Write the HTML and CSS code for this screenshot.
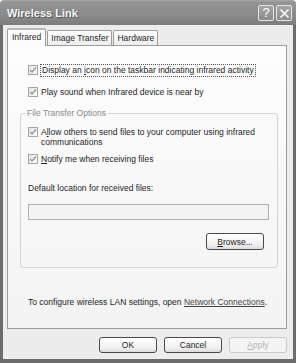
FILE: index.html
```html
<!DOCTYPE html>
<html lang="en">
<head>
  <meta charset="UTF-8" />
  <title>Wireless Link</title>
  <link rel="stylesheet" href="styles.css">
</head>
<body>
  <div class="window">
    <div class="titlebar">
      <span class="title">Wireless Link</span>
      <div class="caption-buttons">
        <span class="cap-btn">?</span>
        <span class="cap-btn">
          <svg width="11" height="11" viewBox="0 0 11 11"><path d="M1.5 1.5 L9.5 9.5 M9.5 1.5 L1.5 9.5" stroke="#fff" stroke-width="1.6" /></svg>
        </span>
      </div>
    </div>

    <div class="frame">
      <div class="tabs">
        <div class="tab active">Infrared</div>
        <div class="tab">Image Transfer</div>
        <div class="tab">Hardware</div>
      </div>

      <div class="panel">
        <div class="check-row">
          <span class="checkbox"><svg width="8" height="8" viewBox="0 0 8 8"><path d="M1 4 L3 6 L7 1.5" fill="none" stroke="#9a9a9a" stroke-width="1.4" /></svg></span>
          <span class="focus">Display an <u>i</u>con on the taskbar indicating infrared activity</span>
        </div>
        <div class="check-row">
          <span class="checkbox"><svg width="8" height="8" viewBox="0 0 8 8"><path d="M1 4 L3 6 L7 1.5" fill="none" stroke="#9a9a9a" stroke-width="1.4" /></svg></span>
          <span>Play sound when Infrared device is near by</span>
        </div>

        <fieldset class="group">
          <legend>File Transfer Options</legend>
          <div class="check-row first">
            <span class="checkbox"><svg width="8" height="8" viewBox="0 0 8 8"><path d="M1 4 L3 6 L7 1.5" fill="none" stroke="#9a9a9a" stroke-width="1.4" /></svg></span>
            <span>A<u>l</u>low others to send files to your computer using infrared<br>communications</span>
          </div>
          <div class="check-row">
            <span class="checkbox"><svg width="8" height="8" viewBox="0 0 8 8"><path d="M1 4 L3 6 L7 1.5" fill="none" stroke="#9a9a9a" stroke-width="1.4" /></svg></span>
            <span><u>N</u>otify me when receiving files</span>
          </div>

          <div class="field-label">Default location for received files:</div>
          <div class="textbox"></div>
          <div class="browse-row">
            <button class="btn"><u>B</u>rowse...</button>
          </div>
        </fieldset>

        <p class="note">To configure wireless LAN settings, open <a href="#">Network Connections</a>.</p>
      </div>

      <div class="buttons">
        <button class="btn">OK</button>
        <button class="btn">Cancel</button>
        <button class="btn disabled"><u>A</u>pply</button>
      </div>
    </div>
  </div>
</body>
</html>
```

FILE: styles.css
```css
:root {
  --frame-dark: #6c6c6c;
  --face: #ececec;
  --panel-border: #9c9c9c;
  --text: #1e1e1e;
}

body {
  margin: 0;
  font-family: 'Liberation Sans', Arial, sans-serif;
  font-size: 8.5px;
  color: var(--text);
}

.window {
  width: 296px;
  height: 363px;
  display: flex;
  flex-direction: column;
}

/* Title bar */
.titlebar {
  height: 25px;
  flex-shrink: 0;
  display: flex;
  align-items: center;
  justify-content: space-between;
  padding: 0 4px 0 7px;
  box-sizing: border-box;
  background: linear-gradient(#a9a9a9 0, #949494 2px, #8a8a8a 60%, #7c7c7c 100%);
  border-radius: 4px 4px 0 0;
}

.title {
  color: #f4f4f4;
  font-weight: bold;
  font-size: 11px;
  text-shadow: 1px 1px 0 #5a5a5a;
  padding-top: 1px;
}

.caption-buttons {
  display: flex;
  gap: 2px;
  padding-top: 1px;
}

.cap-btn {
  width: 14px;
  height: 14px;
  border: 1px solid #e6e6e6;
  border-radius: 2px;
  background: linear-gradient(#a4a4a4, #8c8c8c);
  color: #fff;
  font-size: 13px;
  line-height: 14px;
  text-align: center;
  display: flex;
  align-items: center;
  justify-content: center;
}

/* Frame body */
.frame {
  flex: 1;
  background: var(--face);
  border: 3px solid var(--frame-dark);
  border-top: none;
  border-bottom-width: 4px;
  padding: 3px 6px 0 4px;
  display: flex;
  flex-direction: column;
}

.tabs {
  display: flex;
  align-items: flex-end;
  height: 17px;
  position: relative;
  z-index: 1;
}

.tab {
  height: 15px;
  line-height: 14px;
  padding: 0 3px;
  box-sizing: border-box;
  border: 1px solid var(--panel-border);
  border-bottom: none;
  border-radius: 2px 2px 0 0;
  background: linear-gradient(#fefefe, #ededed);
  margin-right: 1px;
}

.tab.active {
  height: 18px;
  line-height: 15px;
  margin-bottom: -1px;
  background: #fcfcfc;
  padding: 0 4px;
  border-top: 2px solid #b8b8b8;
}

.panel {
  height: 284px;
  box-sizing: border-box;
  border: 1px solid var(--panel-border);
  background: linear-gradient(#fdfdfd, #f3f3f3);
  padding-top: 18px;
}

.check-row {
  display: flex;
  align-items: flex-start;
  gap: 2px;
  line-height: 10px;
  margin: 0 0 9px 20px;
}

.check-row > span:last-child {
  padding: 1px 1px 2px;
}

.checkbox {
  width: 8px;
  height: 8px;
  margin-top: 1px;
  flex-shrink: 0;
  border: 1px solid #a6a6a6;
  background: linear-gradient(135deg, #e6e6e6, #fafafa);
  display: flex;
  align-items: center;
  justify-content: center;
}

.check-row > span.focus {
  border: 1px dotted #555;
  padding: 0 1px 1px;
}

/* Group box */
.group {
  margin: 3px 8px 0 12px;
  padding: 0 13px 17px 7px;
  border: 1px solid #d4d4d4;
  border-radius: 3px;
}

.group legend {
  color: #8a8a8a;
  line-height: 10px;
  padding: 0 2px;
  margin-left: -3px;
}

.group .check-row {
  margin: 0 0 4px 0;
}

.group .check-row.first {
  margin-top: 8px;
}

.field-label {
  margin-top: 17px;
  line-height: 10px;
}

.textbox {
  margin-top: 11px;
  height: 16px;
  margin-right: -5px;
  box-sizing: border-box;
  border: 1px solid #b0b0b0;
  background: #f3f3f3;
}

.browse-row {
  display: flex;
  justify-content: flex-end;
  margin-top: 13px;
}

.btn {
  width: 58px;
  height: 17px;
  padding: 0;
  font-family: inherit;
  font-size: 8.5px;
  color: var(--text);
  border: 1px solid #4a4a4a;
  border-radius: 3px;
  background: linear-gradient(#ffffff, #f0f0f0 70%, #dcdcdc);
}

.btn.disabled {
  color: #b4b4b4;
  border-color: #cacaca;
  background: #f4f4f4;
}

.note {
  margin: 29px 0 0 20px;
  line-height: 10px;
}

.note a {
  color: #444;
}

.buttons {
  display: flex;
  justify-content: flex-end;
  gap: 7px;
  margin-top: 8px;
}

.buttons .btn {
  height: 16px;
}
```
